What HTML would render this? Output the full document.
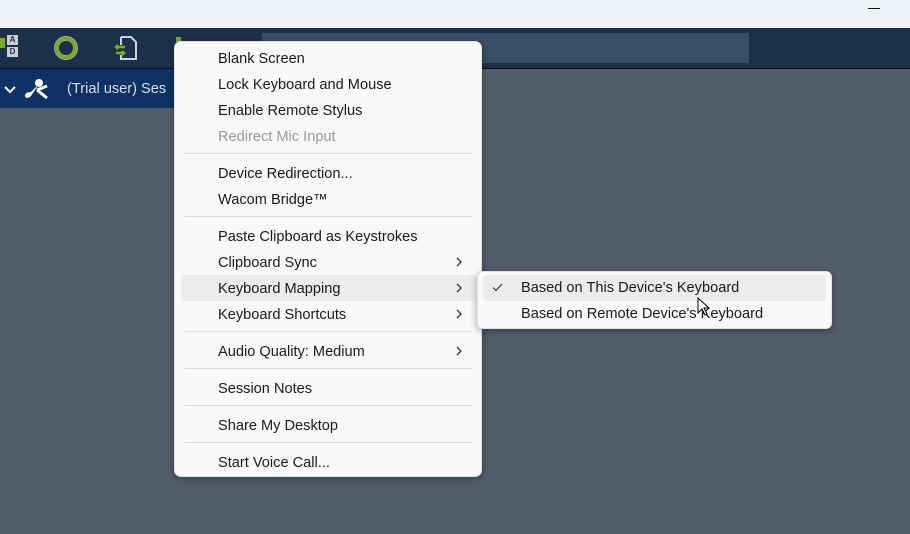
<!DOCTYPE html>
<html><head><style>
*{margin:0;padding:0;box-sizing:border-box}
body{width:910px;height:534px;overflow:hidden;background:#525d6b;position:relative;font-family:"Segoe UI","Liberation Sans",sans-serif}
.abs{position:absolute}
.t{position:absolute;font-size:14.6px;color:#1a1a1a;line-height:18px;white-space:nowrap}
.sep{position:absolute;left:10px;width:287px;height:1px;background:#dcdcdc}
.ar{position:absolute;left:281px}
</style></head><body>
<div class="abs" style="left:0;top:0;width:910px;height:28px;background:#eff2f7"></div>
<div class="abs" style="left:868px;top:8px;width:12px;height:1px;background:#111"></div>
<div class="abs" style="left:0;top:28px;width:910px;height:40px;background:#1d3049"></div>
<div class="abs" style="left:0;top:68px;width:910px;height:1px;background:#0a0f18"></div>
<div class="abs" style="left:262px;top:33px;width:487px;height:30px;background:#384f67"></div>
<div class="abs" style="left:0;top:69px;width:180px;height:39px;background:#0e3264"></div>
<div class="abs" style="left:0;top:38px;width:5px;height:10px;background:#7aaa2a"></div>
<div class="abs" style="left:7px;top:35px;width:11px;height:10px;background:#c9ced6;color:#1d3049;font-size:8px;font-weight:bold;text-align:center;line-height:10px">A</div>
<div class="abs" style="left:7px;top:47px;width:11px;height:10px;background:#c9ced6;color:#1d3049;font-size:8px;font-weight:bold;text-align:center;line-height:10px">D</div>
<div class="abs" style="left:55px;top:37px;width:22px;height:22px;border-radius:50%;border:4px solid #7aaa2a;box-shadow:0 0 0 1px #aab"></div>
<svg class="abs" style="left:113px;top:35px" width="26" height="26" viewBox="0 0 26 26"><path d="M8 2h10l5 5v17H8v-4M8 10V2" fill="none" stroke="#d0d4da" stroke-width="2"/><path d="M3 12h9M5 10l-2 2 2 2M11 18H3m6-2 2 2-2 2" fill="none" stroke="#7aaa2a" stroke-width="2.5"/></svg>
<div class="abs" style="left:176px;top:37px;width:5px;height:5px;background:#7aaa2a"></div>
<svg class="abs" style="left:4px;top:86px" width="12" height="8" viewBox="0 0 12 8"><path d="M1 1l5 5 5-5" fill="none" stroke="#fff" stroke-width="2"/></svg>
<svg class="abs" style="left:23px;top:78px" width="26" height="24" viewBox="0 0 26 24"><circle cx="16" cy="5" r="4" fill="#fff"/><path d="M16 6 L8 18 Q3 22 2 18 Q2 14 8 14 Z" fill="#fff"/><path d="M14 12 L24 8 M14 12 L24 20" stroke="#fff" stroke-width="3"/></svg>
<div class="abs" style="left:67px;top:80px;color:#d8dde6;font-size:14.6px;line-height:18px">(Trial user) Ses</div>
<div class="abs" style="left:174px;top:41px;width:308px;height:436px;background:#f9f9f9;border-radius:7px;box-shadow:0 2px 8px rgba(0,0,0,.35);border:1px solid #e2e2e2">
<div class="abs" style="left:6px;top:233px;width:295px;height:26px;background:#ececec;border-radius:4px"></div>
<div class="t" style="left:43px;top:8px">Blank Screen</div>
<div class="t" style="left:43px;top:34px">Lock Keyboard and Mouse</div>
<div class="t" style="left:43px;top:60px">Enable Remote Stylus</div>
<div class="t" style="left:43px;top:86px;color:#9a9a9a">Redirect Mic Input</div>
<div class="sep" style="top:111px"></div>
<div class="t" style="left:43px;top:123px">Device Redirection...</div>
<div class="t" style="left:43px;top:149px">Wacom Bridge™</div>
<div class="sep" style="top:174px"></div>
<div class="t" style="left:43px;top:186px">Paste Clipboard as Keystrokes</div>
<div class="t" style="left:43px;top:212px">Clipboard Sync</div>
<svg class="ar" style="top:215px" width="6" height="10" viewBox="0 0 6 10"><path d="M1 1l4 4-4 4" fill="none" stroke="#333" stroke-width="1.3"/></svg>
<div class="t" style="left:43px;top:238px">Keyboard Mapping</div>
<svg class="ar" style="top:241px" width="6" height="10" viewBox="0 0 6 10"><path d="M1 1l4 4-4 4" fill="none" stroke="#333" stroke-width="1.3"/></svg>
<div class="t" style="left:43px;top:264px">Keyboard Shortcuts</div>
<svg class="ar" style="top:267px" width="6" height="10" viewBox="0 0 6 10"><path d="M1 1l4 4-4 4" fill="none" stroke="#333" stroke-width="1.3"/></svg>
<div class="sep" style="top:289px"></div>
<div class="t" style="left:43px;top:301px">Audio Quality: Medium</div>
<svg class="ar" style="top:304px" width="6" height="10" viewBox="0 0 6 10"><path d="M1 1l4 4-4 4" fill="none" stroke="#333" stroke-width="1.3"/></svg>
<div class="sep" style="top:326px"></div>
<div class="t" style="left:43px;top:338px">Session Notes</div>
<div class="sep" style="top:363px"></div>
<div class="t" style="left:43px;top:375px">Share My Desktop</div>
<div class="sep" style="top:400px"></div>
<div class="t" style="left:43px;top:412px">Start Voice Call...</div>
</div>
<div class="abs" style="left:477px;top:271px;width:355px;height:58px;background:#f9f9f9;border-radius:6px;box-shadow:0 2px 8px rgba(0,0,0,.35);border:1px solid #e2e2e2">
<div class="abs" style="left:5px;top:3px;width:343px;height:26px;background:#ececec;border-radius:4px"></div>
<svg class="abs" style="left:14px;top:11px" width="11" height="9" viewBox="0 0 11 9"><path d="M1 4.5l3 3 6-6.5" fill="none" stroke="#333" stroke-width="1.2"/></svg>
<div class="t" style="left:43px;top:7px">Based on This Device's Keyboard</div>
<div class="t" style="left:43px;top:33px">Based on Remote Device's Keyboard</div>
</div>
<svg class="abs" style="left:697px;top:297px" width="14" height="20" viewBox="0 0 14 20"><path d="M1 1v15l4-4 3 6 2-1-3-6h5z" fill="#fff" stroke="#000" stroke-width="1"/></svg>
</body></html>
